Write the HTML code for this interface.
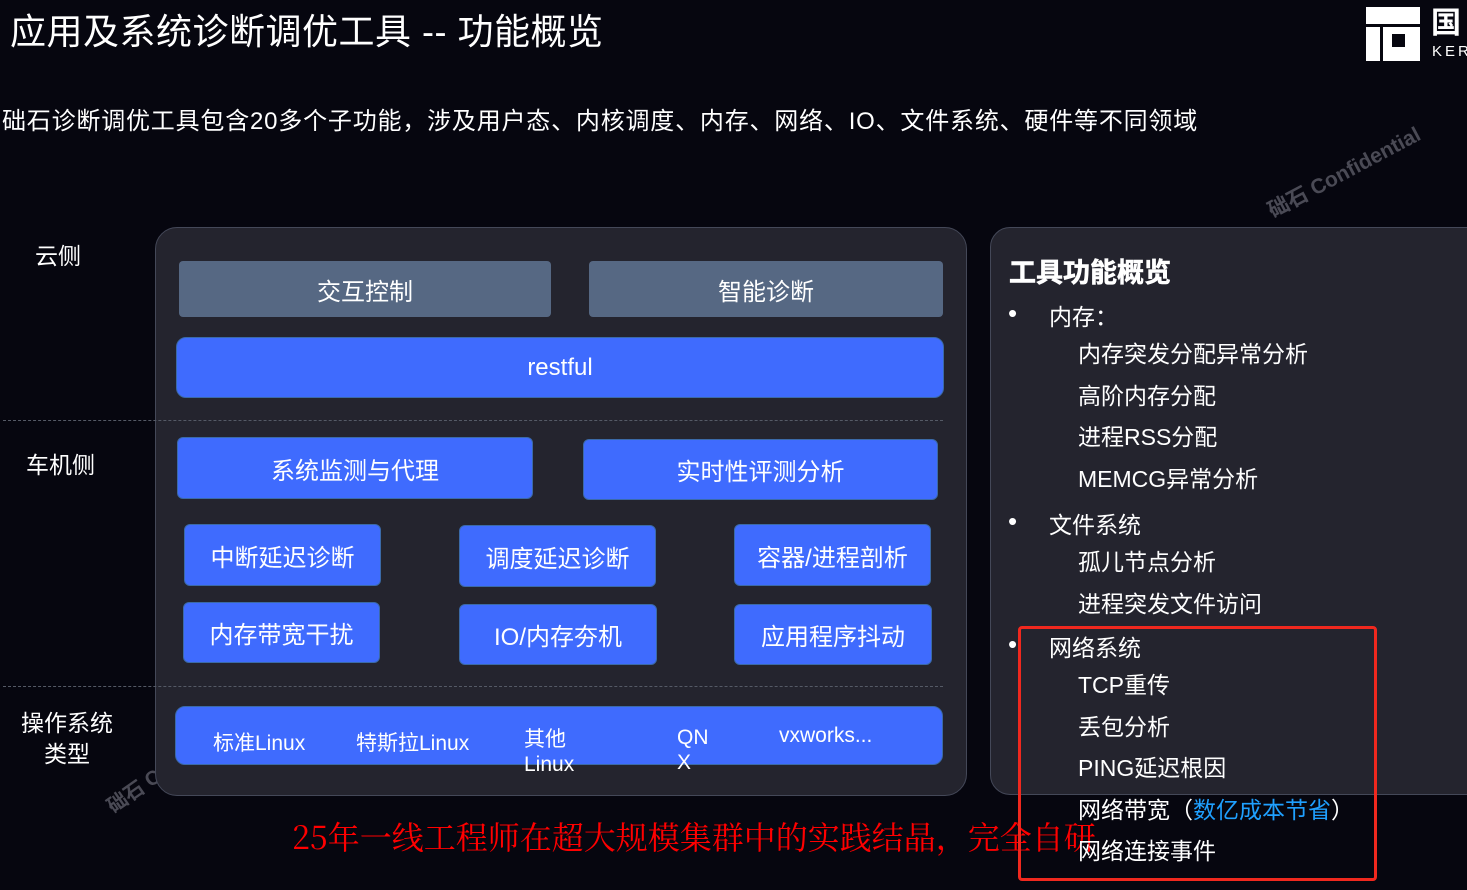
<!DOCTYPE html><html><head><meta charset="utf-8"><style>
*{margin:0;padding:0;box-sizing:border-box}
body{width:1467px;height:890px;background:#06060f;position:relative;overflow:hidden;font-family:"Liberation Sans","Noto Sans CJK SC",sans-serif;color:#fff}
.a{position:absolute;white-space:nowrap}
.b{position:absolute;display:flex;align-items:center;justify-content:center;font-size:24px;color:#fff;border-radius:6px}
.bl{background:#3f6bfe;border:1.5px solid #3b6aa8}
.gr{background:#566883;border-radius:4px}
.dl{position:absolute;left:3px;width:940px;border-top:1.5px dashed #555a66}
.r{position:absolute;left:1078px;font-size:23px;line-height:30px}
.d{position:absolute;left:1008px;font-size:26px;line-height:30px}
</style></head><body>
<div class="a" style="left:10px;top:10px;font-size:36px;line-height:44px;letter-spacing:0.5px">应用及系统诊断调优工具 -- 功能概览</div>
<div class="a" style="left:1366px;top:7px;width:54px;height:54px;background:#fff"></div>
<div class="a" style="left:1366px;top:24px;width:54px;height:3px;background:#06060f"></div>
<div class="a" style="left:1380px;top:27px;width:3px;height:34px;background:#06060f"></div>
<div class="a" style="left:1392px;top:34px;width:13px;height:13px;background:#06060f"></div>
<div class="a" style="left:1431px;top:8px;font-size:30px;line-height:32px;font-weight:bold">国</div>
<div class="a" style="left:1432px;top:43px;font-size:15px;letter-spacing:3px">KER</div>
<div class="a" style="left:2px;top:106px;font-size:24px;line-height:32px;letter-spacing:0.8px">础石诊断调优工具包含20多个子功能，涉及用户态、内核调度、内存、网络、IO、文件系统、硬件等不同领域</div>
<div class="a" style="left:1262px;top:198px;font-size:21px;color:#4a4a55;font-weight:bold;transform:rotate(-28deg);transform-origin:left top">础石 Confidential</div>
<div class="a" style="left:100px;top:795px;font-size:20px;color:#4a4a55;font-weight:bold;transform:rotate(-35deg);transform-origin:left top">础石 C</div>

<div class="a" style="left:155px;top:227px;width:812px;height:569px;background:#24242e;border:1.5px solid #444858;border-radius:22px"></div>
<div class="a" style="left:990px;top:227px;width:500px;height:568px;background:#24242e;border:1.5px solid #444858;border-radius:20px"></div>
<div class="dl" style="top:420px"></div>
<div class="dl" style="top:686px"></div>

<div class="a" style="left:35px;top:237px;font-size:23px">云侧</div>
<div class="a" style="left:26px;top:446px;font-size:23px">车机侧</div>
<div class="a" style="left:18px;top:708px;font-size:23px;text-align:center;line-height:31px;white-space:normal;width:98px">操作系统<br>类型</div>

<div class="b gr" style="left:179px;top:261px;width:372px;height:56px">交互控制</div>
<div class="b gr" style="left:589px;top:261px;width:354px;height:56px">智能诊断</div>
<div class="b bl" style="left:176px;top:337px;width:768px;height:61px;border-radius:10px">restful</div>
<div class="b bl" style="left:177px;top:437px;width:356px;height:62px">系统监测与代理</div>
<div class="b bl" style="left:583px;top:439px;width:355px;height:61px">实时性评测分析</div>
<div class="b bl" style="left:184px;top:524px;width:197px;height:62px">中断延迟诊断</div>
<div class="b bl" style="left:459px;top:525px;width:197px;height:62px">调度延迟诊断</div>
<div class="b bl" style="left:734px;top:524px;width:197px;height:62px">容器/进程剖析</div>
<div class="b bl" style="left:183px;top:602px;width:197px;height:61px">内存带宽干扰</div>
<div class="b bl" style="left:459px;top:604px;width:198px;height:61px">IO/内存夯机</div>
<div class="b bl" style="left:734px;top:604px;width:198px;height:61px">应用程序抖动</div>
<div class="a" style="left:175px;top:706px;width:768px;height:59px;background:#3f6bfe;border:1.5px solid #3b6aa8;border-radius:10px"></div>
<div class="a" style="left:213px;top:727px;font-size:21px">标准Linux</div>
<div class="a" style="left:356px;top:727px;font-size:21px">特斯拉Linux</div>
<div class="a" style="left:524px;top:727px;font-size:21px;line-height:25px">其他<br>Linux</div>
<div class="a" style="left:677px;top:725px;font-size:21px;line-height:25px">QN<br>X</div>
<div class="a" style="left:779px;top:724px;font-size:21px">vxworks...</div>

<div class="a" style="left:292px;top:816px;font-size:32px;color:#f00;line-height:40px;font-family:'Noto Serif CJK SC','Liberation Serif',serif">25年一线工程师在超大规模集群中的实践结晶，完全自研</div>

<div class="a" style="left:1009px;top:251px;font-size:27px;font-weight:bold;-webkit-text-stroke:0.6px #fff">工具功能概览</div>
<div class="d" style="top:298px">•</div>
<div class="a" style="left:1049px;top:298px;font-size:23px">内存：</div>
<div class="r" style="top:339px">内存突发分配异常分析</div>
<div class="r" style="top:381px">高阶内存分配</div>
<div class="r" style="top:422px">进程RSS分配</div>
<div class="r" style="top:464px">MEMCG异常分析</div>
<div class="d" style="top:506px">•</div>
<div class="a" style="left:1049px;top:506px;font-size:23px">文件系统</div>
<div class="r" style="top:547px">孤儿节点分析</div>
<div class="r" style="top:589px">进程突发文件访问</div>
<div class="d" style="top:629px">•</div>
<div class="a" style="left:1049px;top:629px;font-size:23px">网络系统</div>
<div class="r" style="top:670px">TCP重传</div>
<div class="r" style="top:712px">丢包分析</div>
<div class="r" style="top:753px">PING延迟根因</div>
<div class="r" style="top:795px">网络带宽（<span style="color:#1fa0ff">数亿成本节省</span>）</div>
<div class="r" style="top:836px">网络连接事件</div>
<div class="a" style="left:1018px;top:626px;width:359px;height:255px;border:3px solid #f0281e;border-radius:4px"></div>
</body></html>
